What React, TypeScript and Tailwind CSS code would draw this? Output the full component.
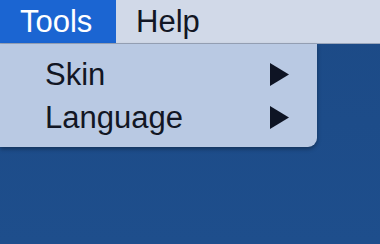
export default function App() {
  return (
    <div
      className="relative w-[380px] h-[244px] overflow-hidden bg-gradient-to-b from-[#1c4a86] to-[#1e4e8c]"
      style={{ fontFamily: '"Liberation Sans", Arial, sans-serif' }}
    >
      {/* menu bar */}
      <div className="flex h-[44px] bg-[#d1d9e8] border-b border-[#9aa6bb] text-[31px] leading-none text-[#121624]">
        <div className="flex items-center w-[116px] pl-[20px] bg-[#1b65d2] text-white">
          Tools
        </div>
        <div className="flex items-center pl-[20px]">Help</div>
      </div>

      {/* dropdown */}
      <div className="absolute left-0 top-[44px] w-[317px] h-[103px] bg-[#b9c9e3] rounded-br-[9px] shadow-[0_2px_4px_rgba(0,0,0,0.35)] flex flex-col pt-[13px] text-[31px] leading-none text-[#121624]">
        <div className="flex items-center justify-between h-[34px] pl-[45px] pr-[28px]">
          <span>Skin</span>
          <Arrow />
        </div>
        <div className="flex items-center justify-between h-[34px] mt-[9px] pl-[45px] pr-[28px]">
          <span>Language</span>
          <Arrow />
        </div>
      </div>
    </div>
  );
}

function Arrow() {
  return (
    <svg width="19" height="23" viewBox="0 0 19 23">
      <path d="M0 0 L19 11.5 L0 23 Z" fill="#0e1424" />
    </svg>
  );
}
